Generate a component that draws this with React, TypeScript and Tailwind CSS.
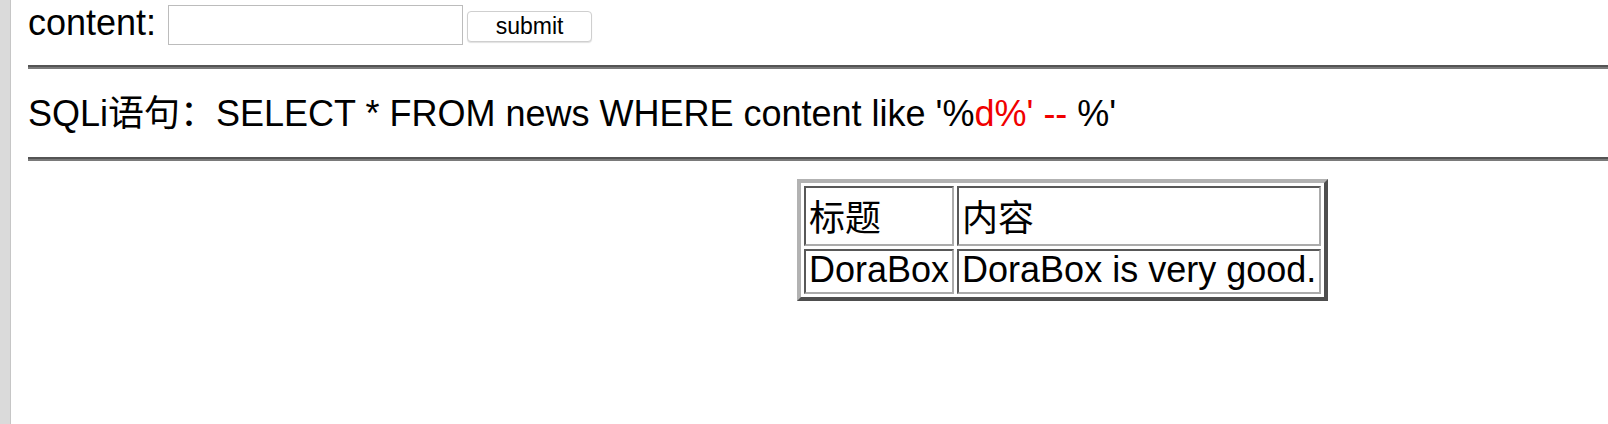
import React from "react";

const font = "font-['Liberation_Sans','Noto_Sans_CJK_SC',sans-serif]";

const Rule: React.FC = () => (
  <div className="w-full h-[4px] border-t-2 border-[#545454] bg-[#7a7a7a]" />
);

const rows = [
  { title: "标题", content: "内容", head: true },
  { title: "DoraBox", content: "DoraBox is very good.", head: false },
];

const App: React.FC = () => {
  return (
    <div className={`w-full min-h-screen h-[424px] bg-white flex flex-row text-black ${font}`}>
      <div className="w-[11px] h-full shrink-0 bg-[#dadada] border-r border-[#c6c6c6]" />
      <div className="grow flex flex-col pl-[17px] overflow-hidden">
        <form
          className="w-full flex flex-row items-start"
          onSubmit={(e) => e.preventDefault()}
        >
          <label className="mt-[2px] text-[36px] leading-[41px] whitespace-nowrap">
            content:
          </label>
          <input
            type="text"
            className="ml-[12px] mt-[5px] w-[295px] h-[40px] border border-[#bcbcbc] bg-white outline-none px-1 text-[22px]"
          />
          <button
            type="submit"
            className="ml-[4px] mt-[11px] w-[125px] h-[31px] rounded-[4px] border border-[#cfcfcf] bg-white shadow-[0_1px_1px_rgba(0,0,0,0.12)] text-[23px] leading-[29px] text-black"
          >
            submit
          </button>
        </form>

        <div className="mt-[20px]">
          <Rule />
        </div>

        <p className="mt-[24px] text-[36px] leading-[41px] whitespace-nowrap">
          SQLi语句：SELECT * FROM news WHERE content like '%
          <span className="text-[#f00000]">d%' --</span> %'
        </p>

        <div className="mt-[23px]">
          <Rule />
        </div>

        <div className="mt-[18px] ml-[769px]">
          <table className="border-separate border-spacing-[3px] border-4 border-t-[#b2b2b2] border-l-[#b2b2b2] border-b-[#4e4e4e] border-r-[#4e4e4e] text-[36px] whitespace-nowrap">
            <tbody>
              {rows.map((r) => (
                <tr key={r.title}>
                  {[r.title, r.content].map((cell, i) => (
                    <td
                      key={i}
                      className={`border-2 border-t-[#585858] border-l-[#585858] border-b-[#ababab] border-r-[#ababab] px-[3px] text-left align-top ${
                        r.head
                          ? "pt-[6px] pb-0 leading-[50px]"
                          : "pt-[1px] pb-[4px] leading-[36px]"
                      }`}
                    >
                      {cell}
                    </td>
                  ))}
                </tr>
              ))}
            </tbody>
          </table>
        </div>
      </div>
    </div>
  );
};

export default App;
